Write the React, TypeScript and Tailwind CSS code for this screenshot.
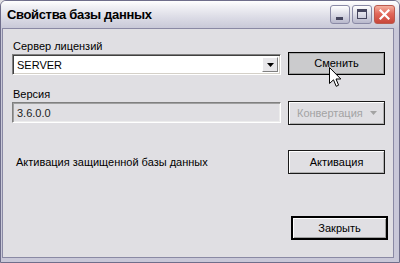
import React from "react";

const font = { fontFamily: '"Liberation Sans", Arial, sans-serif' };

function Btn({ children, className = "" }: { children: React.ReactNode; className?: string }) {
  return (
    <div className={"w-[97px] h-[23px] flex items-center justify-center text-[11px] " + className}>
      {children}
    </div>
  );
}

export default function App() {
  return (
    <div className="w-[400px] h-[263px] relative overflow-hidden bg-[#e0dfe3] text-black" style={font}>
      <div className="w-full h-full flex flex-col border border-[#6f6e8b] rounded-t-[6px]">
        {/* Title bar */}
        <div className="h-[27px] flex items-center pl-[6px] pr-[4px] rounded-t-[5px] bg-[linear-gradient(to_bottom,#ffffff_0%,#f1f1f5_20%,#dcdce6_60%,#c9c9d8_100%)]">
          <div className="flex-1 text-[13px] font-bold text-black tracking-[-0.35px] pt-[1px]">Свойства базы данных</div>
          <div className="flex gap-[2px] items-center">
            <div className="w-[20px] h-[19px] rounded-[3px] border border-[#8a8aa6] bg-[linear-gradient(to_bottom,#ffffff,#d8d8e4_55%,#b8b8cc)] relative">
              <div className="absolute left-[5px] top-[11px] w-[7px] h-[3px] bg-[#45455e]" />
            </div>
            <div className="w-[20px] h-[19px] rounded-[3px] border border-[#8a8aa6] bg-[linear-gradient(to_bottom,#ffffff,#d8d8e4_55%,#b8b8cc)] relative">
              <div className="absolute left-[4px] top-[3px] w-[10px] h-[10px] border border-[#45455e] border-t-[3px]" />
            </div>
            <div className="w-[21px] h-[19px] rounded-[3px] border border-[#ba5a4e] bg-[linear-gradient(to_bottom,#f4b09f,#e2685a_45%,#c8463a)] flex items-center justify-center">
              <svg width="11" height="11" viewBox="0 0 11 11">
                <path d="M1.5 1.5 L9.5 9.5 M9.5 1.5 L1.5 9.5" stroke="#ffffff" strokeWidth="2.2" strokeLinecap="square" />
              </svg>
            </div>
          </div>
        </div>

        {/* Client area with frame */}
        <div className="flex-1 border-l border-l-[#c9c8d8] border-r-[5px] border-r-[#c9c8d8] border-b-[4px] border-b-[#c9c8d8] flex">
          <div className="flex-1 border border-[#8a89a4] bg-[#e0dfe3] pl-[9px] pr-[5px] pt-[10px] flex flex-col">
            {/* Row 1 */}
            <div className="flex items-end gap-[7px]">
              <div className="w-[269px] flex flex-col">
                <div className="h-[14px] leading-[14px] text-[11px] pl-[1px]">Сервер лицензий</div>
                <div className="mt-[1px] h-[21px] bg-white border border-t-[#808080] border-l-[#808080] border-r-white border-b-white shadow-[inset_1px_1px_0_#404040,inset_-1px_-1px_0_#d4d0c8] flex items-center">
                  <div className="flex-1 pl-[4px] text-[11px] leading-[14px]">SERVER</div>
                  <div className="w-[16px] h-[15px] mr-[2px] bg-[#e8e7ea] border border-t-white border-l-white border-r-[#808080] border-b-[#808080] flex items-center justify-center">
                    <svg width="7" height="4" viewBox="0 0 7 4"><path d="M0 0 H7 L3.5 4 Z" fill="#000" /></svg>
                  </div>
                </div>
              </div>
              <Btn className="bg-[#cbcbcd] border border-black shadow-[inset_1px_1px_0_#a8a8a8,inset_-1px_-1px_0_#9a9a9a]">Сменить</Btn>
            </div>

            {/* Row 2 */}
            <div className="flex items-end gap-[7px] mt-[12px]">
              <div className="w-[269px] flex flex-col">
                <div className="h-[14px] leading-[14px] text-[11px] pl-[1px]">Версия</div>
                <div className="mt-[1px] h-[21px] bg-[#e0dfe3] border border-t-[#808080] border-l-[#808080] border-r-white border-b-white shadow-[inset_1px_1px_0_#a0a0a0,inset_-1px_-1px_0_#ececec] flex items-center">
                  <div className="flex-1 pl-[4px] text-[11px] leading-[14px] text-[#222]">3.6.0.0</div>
                </div>
              </div>
              <Btn className="h-[24px] mb-[-2px] border border-[#1a1a1a] shadow-[inset_1px_1px_0_#ffffff,inset_-1px_-1px_0_#b0b0b0] text-[#a3a3a3] justify-start pl-[8px]">
                <span className="flex-1">Конвертация</span>
                <svg width="7" height="4" viewBox="0 0 7 4" className="mr-[7px]"><path d="M0 0 H7 L3.5 4 Z" fill="#a3a3a3" /></svg>
              </Btn>
            </div>

            {/* Row 3 */}
            <div className="flex items-center gap-[7px] mt-[27px]">
              <div className="w-[269px] pl-[4px] text-[11px] leading-[14px]">Активация защищенной базы данных</div>
              <Btn className="h-[24px] border border-[#1a1a1a] shadow-[inset_1px_1px_0_#ffffff,inset_-1px_-1px_0_#b0b0b0]">Активация</Btn>
            </div>

            {/* Row 4 */}
            <div className="flex justify-end mt-[42px] pr-0">
              <Btn className="h-[24px] border-2 border-black shadow-[inset_1px_1px_0_#ffffff,inset_-1px_-1px_0_#a0a0a0]">Закрыть</Btn>
            </div>
          </div>
        </div>
      </div>

      {/* Mouse cursor */}
      <svg className="absolute left-[329px] top-[67px]" width="13" height="21" viewBox="0 0 13 21">
        <path d="M0.5 0.5 L0.5 16.5 L4.5 12.8 L7.2 19.3 L9.6 18.2 L7 12 L11.8 12 Z" fill="#ffffff" stroke="#000000" strokeWidth="1" strokeLinejoin="miter" />
      </svg>
    </div>
  );
}
